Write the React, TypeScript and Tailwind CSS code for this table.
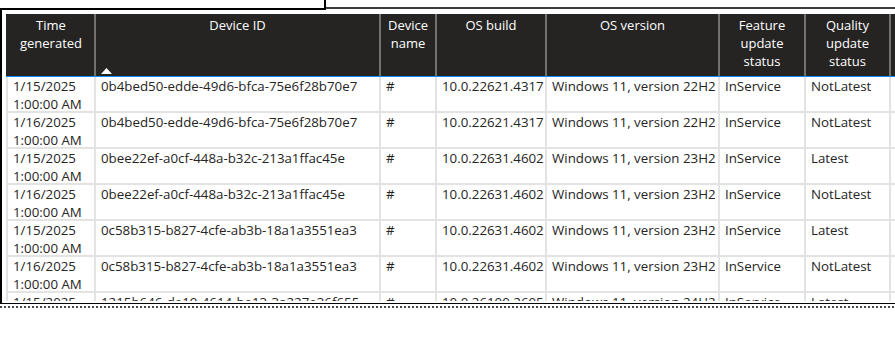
import React from "react";

const widths = [88, 285, 56, 110, 173, 86, 85, 100];

type Row = [string, string, string, string, string, string, string, string];

const rows: Row[] = [
  ["1/15/2025", "0b4bed50-edde-49d6-bfca-75e6f28b70e7", "#", "10.0.22621.4317", "Windows 11, version 22H2", "InService", "NotLatest", ""],
  ["1/16/2025", "0b4bed50-edde-49d6-bfca-75e6f28b70e7", "#", "10.0.22621.4317", "Windows 11, version 22H2", "InService", "NotLatest", ""],
  ["1/15/2025", "0bee22ef-a0cf-448a-b32c-213a1ffac45e", "#", "10.0.22631.4602", "Windows 11, version 23H2", "InService", "Latest", ""],
  ["1/16/2025", "0bee22ef-a0cf-448a-b32c-213a1ffac45e", "#", "10.0.22631.4602", "Windows 11, version 23H2", "InService", "NotLatest", ""],
  ["1/15/2025", "0c58b315-b827-4cfe-ab3b-18a1a3551ea3", "#", "10.0.22631.4602", "Windows 11, version 23H2", "InService", "Latest", ""],
  ["1/16/2025", "0c58b315-b827-4cfe-ab3b-18a1a3551ea3", "#", "10.0.22631.4602", "Windows 11, version 23H2", "InService", "NotLatest", ""],
  ["1/15/2025", "1215b646-de19-4614-be13-3a227e36f655", "#", "10.0.26100.2605", "Windows 11, version 24H2", "InService", "Latest", ""],
];

const headers: React.ReactNode[] = [
  <>Time<br />generated</>,
  <>Device ID</>,
  <>Device<br />name</>,
  <>OS build</>,
  <>OS version</>,
  <>Feature<br />update<br />status</>,
  <>Quality<br />update<br />status</>,
  <></>,
];

export default function App() {
  return (
    <div
      className="w-[895px] h-[347px] bg-white overflow-hidden"
      style={{ fontFamily: '"Segoe UI", "Open Sans", "Liberation Sans", sans-serif' }}
    >
      <div className="flex h-[10px]">
        <div className="w-[326px] h-[10px] border-r-2 border-b-2 border-black" />
        <div className="flex-1">
          <div className="mt-[7px] h-[2px] bg-[#3c3c3c]" />
        </div>
      </div>
      <div className="border-l-2 border-black pl-[4px] pt-[4px] pb-[2px]">
        <div className="h-[287px] overflow-hidden">
          <div className="flex h-[62px] bg-[#252423] text-white text-[13px] leading-[18px]">
            {headers.map((h, i) => (
              <div
                key={i}
                className={
                  "relative shrink-0 border-l-2 px-[5px] pt-[2px] text-center " +
                  (i === 0 ? "border-[#252423]" : "border-[#727272]")
                }
                style={{ width: widths[i] }}
              >
                {h}
                {i === 1 && (
                  <svg className="absolute left-[5px] top-[54px]" width="11" height="6" viewBox="0 0 11 6">
                    <polygon points="5.5,0 11,6 0,6" fill="#ffffff" />
                  </svg>
                )}
              </div>
            ))}
          </div>
          <div className="h-px bg-[#118dff] w-[1000px]" />
          {rows.map((r, ri) => (
            <div key={ri} className="flex h-[36px] border-b-2 border-[#e3e3e3] text-[13.3px] leading-[18px] text-[#252423]">
              {r.map((c, ci) => (
                <div
                  key={ci}
                  className="shrink-0 border-l-2 border-[#e3e3e3] px-[5px] whitespace-nowrap"
                  style={{ width: widths[ci] }}
                >
                  {ci === 0 ? (
                    <>
                      <div>{c}</div>
                      <div>1:00:00 AM</div>
                    </>
                  ) : (
                    c
                  )}
                </div>
              ))}
            </div>
          ))}
        </div>
      </div>
      <div className="h-px bg-black" />
      <div className="h-[2px]" />
      <div className="h-[2px] bg-[repeating-linear-gradient(90deg,#4a4a4a_0px,#4a4a4a_2px,transparent_2px,transparent_4px)]" />
    </div>
  );
}
